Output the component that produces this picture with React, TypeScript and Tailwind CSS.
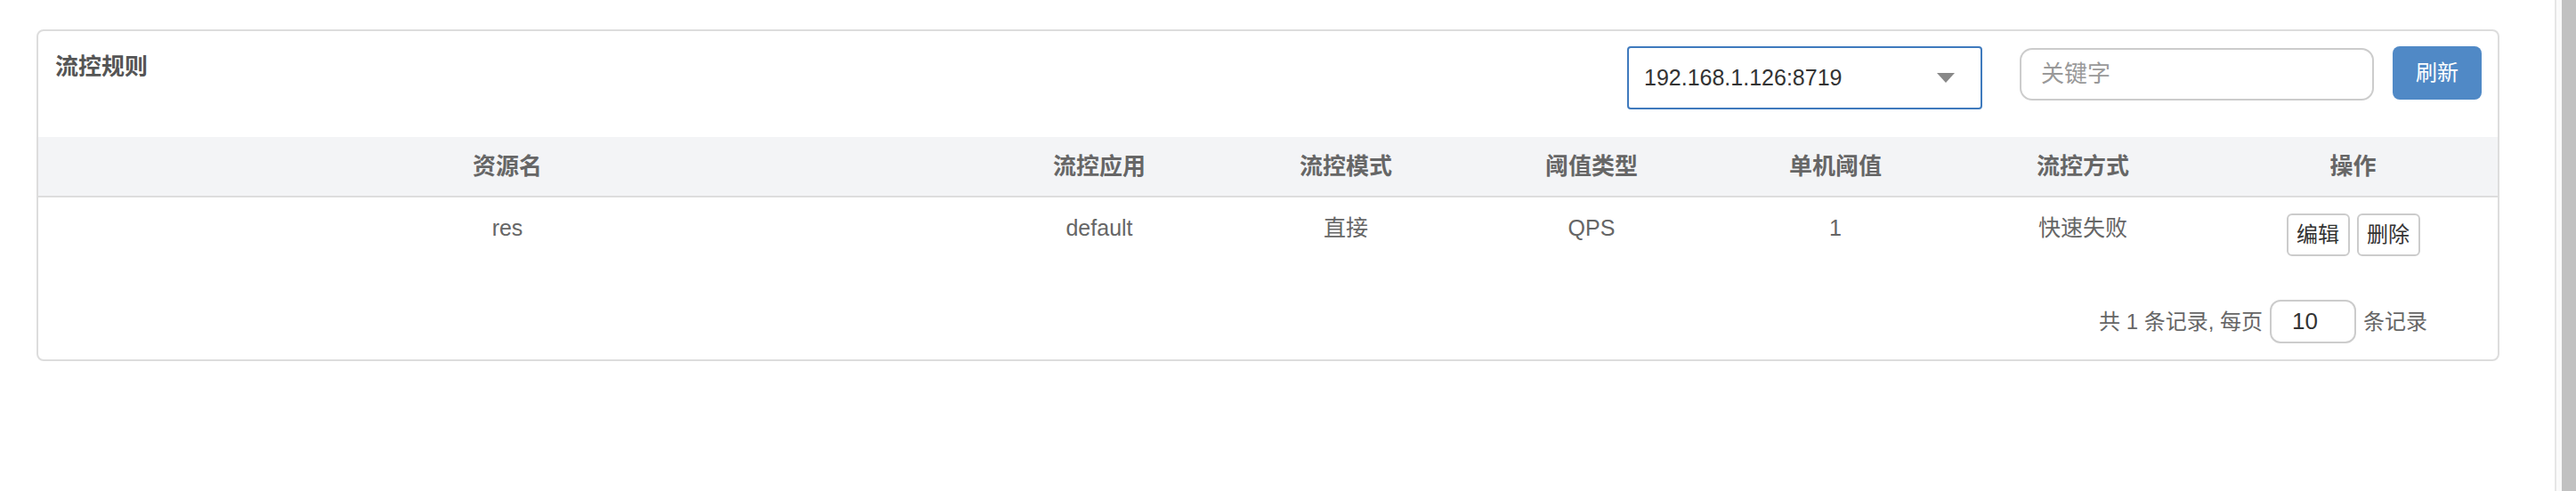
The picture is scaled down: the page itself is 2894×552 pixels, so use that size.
import React from 'react';

const font = "font-['Liberation_Sans','Noto_Sans_CJK_SC',sans-serif]";

const columns = ['资源名', '流控应用', '流控模式', '阈值类型', '单机阈值', '流控方式', '操作'];
const grid = 'grid grid-cols-[1054px_276px_278px_274px_274px_282px_1fr]';

const rows = [
  { resource: 'res', app: 'default', mode: '直接', grade: 'QPS', count: '1', behavior: '快速失败' },
];

export default function App() {
  return (
    <div className={`flex h-[552px] w-full bg-white ${font}`}>
      <div className="flex-1 pl-[41px] pr-[62px] pt-[33px]">
        <div className="rounded-[8px] border-2 border-[#dddddd] bg-white">
          {/* top bar */}
          <div className="flex h-[119px] items-start pl-[19px] pr-[18px] pt-[17px]">
            <h3 className="mt-[5px] flex-1 text-[26px] font-bold leading-[36px] text-[#555]">流控规则</h3>
            <div className="flex h-[71px] w-[399px] items-center justify-between rounded-[4px] border-2 border-[#3f7abd] pl-[17px] pr-[29px] text-[25px] text-[#333]">
              <span>192.168.1.126:8719</span>
              <span className="h-0 w-0 border-x-[10px] border-t-[11px] border-x-transparent border-t-[#888]" />
            </div>
            <div className="ml-[42px] mt-[2px] flex h-[59px] w-[398px] items-center rounded-[14px] border-2 border-[#cccccc] px-[22px] text-[26px] text-[#999]">
              关键字
            </div>
            <button className="ml-[21px] h-[60px] w-[100px] rounded-[8px] bg-[#5089c6] text-[24px] text-white">
              刷新
            </button>
          </div>

          {/* table header */}
          <div className={`${grid} h-[68px] items-center border-b-2 border-[#dddddd] bg-[#f3f4f6] text-center text-[26px] font-bold text-[#666]`}>
            {columns.map(c => (
              <div key={c}>{c}</div>
            ))}
          </div>

          {/* rows */}
          {rows.map(r => (
            <div key={r.resource} className={`${grid} items-start pb-[49px] pt-[18px] text-center text-[25px] leading-[30px] text-[#666]`}>
              <div className="pt-px">{r.resource}</div>
              <div className="pt-px">{r.app}</div>
              <div className="pt-px">{r.mode}</div>
              <div className="pt-px">{r.grade}</div>
              <div className="pt-px">{r.count}</div>
              <div className="pt-px">{r.behavior}</div>
              <div className="flex justify-center gap-[8px]">
                <button className="h-[48px] w-[71px] rounded-[6px] border-2 border-[#cccccc] bg-white text-[24px] text-[#333]">编辑</button>
                <button className="h-[48px] w-[71px] rounded-[6px] border-2 border-[#cccccc] bg-white text-[24px] text-[#333]">删除</button>
              </div>
            </div>
          ))}

          {/* pagination */}
          <div className="flex items-center justify-end pb-[18px] pr-[79px] text-[24px] text-[#666]">
            <span>共 1 条记录, 每页</span>
            <div className="mx-[8px] flex h-[49px] w-[97px] items-center rounded-[12px] border-2 border-[#cccccc] pl-[23px] text-[26px] text-[#333]">
              10
            </div>
            <span>条记录</span>
          </div>
        </div>
      </div>

      {/* scrollbar strip */}
      <div className="flex w-[24px] border-l-2 border-[#e6e6e6] bg-[#fafafa]">
        <div className="ml-[6px] flex-1 bg-[#c1c1c1]" />
      </div>
    </div>
  );
}
